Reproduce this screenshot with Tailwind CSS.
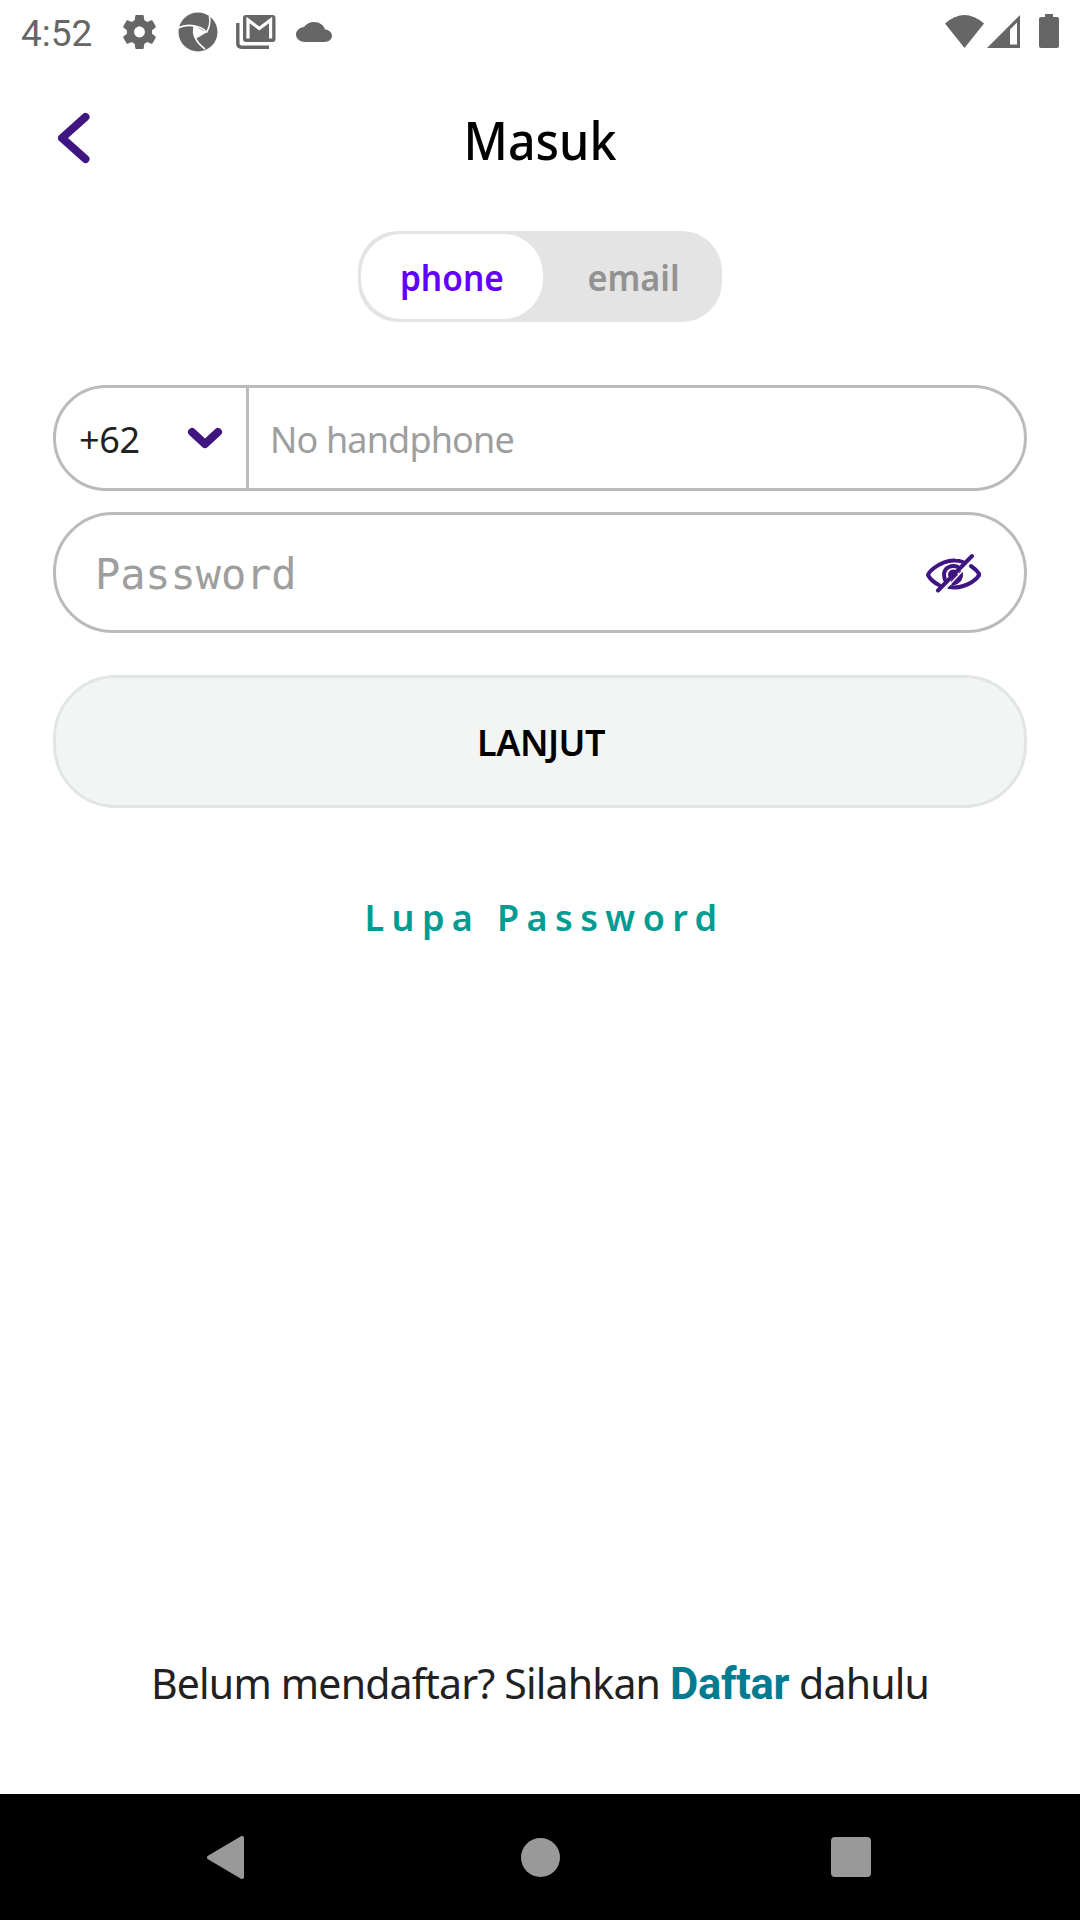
<!DOCTYPE html>
<html lang="id">
<head>
<meta charset="utf-8">
<title>Masuk</title>
<script src="https://cdn.jsdelivr.net/npm/@tailwindcss/browser@4"></script>
</head>
<body class="bg-white">
<div class="flex h-[1920px] w-[1080px] flex-col overflow-hidden bg-white font-['Noto_Sans',sans-serif] text-[36px] text-[#212121]">

  <!-- Status bar -->
  <header class="flex h-16 shrink-0 items-center justify-between pr-[21px] pl-[21px] text-[#666]">
    <div class="flex items-center">
      <span class="w-[102px] pt-[3px] font-['Roboto',sans-serif] text-[37px] leading-[61px]">4:52</span>
      <svg class="h-[34px] w-[33px]" viewBox="2.2 2 19.6 20" preserveAspectRatio="none" fill="currentColor"><path d="M19.43 12.98c.04-.32.07-.64.07-.98s-.03-.66-.07-.98l2.11-1.65c.19-.15.24-.42.12-.64l-2-3.46c-.12-.22-.39-.3-.61-.22l-2.49 1c-.52-.4-1.08-.73-1.69-.98l-.38-2.65C14.46 2.18 14.25 2 14 2h-4c-.25 0-.46.18-.49.42l-.38 2.65c-.61.25-1.17.59-1.69.98l-2.49-1c-.23-.09-.49 0-.61.22l-2 3.46c-.13.22-.07.49.12.64l2.11 1.65c-.04.32-.07.65-.07.98s.03.66.07.98l-2.11 1.65c-.19.15-.24.42-.12.64l2 3.46c.12.22.39.3.61.22l2.49-1c.52.4 1.08.73 1.69.98l.38 2.65c.03.24.24.42.49.42h4c.25 0 .46-.18.49-.42l.38-2.65c.61-.25 1.17-.59 1.69-.98l2.49 1c.23.09.49 0 .61-.22l2-3.46c.12-.22.07-.49-.12-.64l-2.11-1.65zM12 15.2c-1.8 0-3.200-1.400-3.200-3.200s1.400-3.200 3.200-3.200 3.200 1.400 3.200 3.200-1.400 3.200-3.200 3.200z"/></svg>
      <svg class="ml-[22px] h-10 w-10" viewBox="0 0 40 40"><circle cx="20" cy="20" r="19.500" fill="currentColor"/><path d="M16.500 14L28.500 20.500L17.500 27Q14.500 21 16.500 14Z" fill="#fff"/><g fill="none" stroke="#fff" stroke-width="1.600"><path d="M0 16Q9 11 22 15.500Q26 17 28.500 20.500"/><path d="M31.500 4Q33 13 28.500 20.500"/><path d="M38 24Q32 28.500 29 20.500Q22 28 11 26.500L0 22" stroke-width="0"/><path d="M16.500 13.500Q12.500 26 27 37"/></g></svg>
      <svg class="ml-[18px] h-[34px] w-10" viewBox="0 0 40 34"><path d="M1.800 8V28.500Q1.800 32.200 5.500 32.200H33" fill="none" stroke="currentColor" stroke-width="3.400"/><rect x="7" y="0" width="32.500" height="27" rx="3" fill="currentColor"/><path d="M12 23.500V5L23.300 13.500L34.600 5V23.500" fill="none" stroke="#fff" stroke-width="3.200"/></svg>
      <svg class="ml-[20px] h-[20px] w-9" viewBox="0 4 24 16" preserveAspectRatio="none" fill="currentColor"><path d="M19.350 10.040C18.670 6.590 15.640 4 12 4 9.110 4 6.600 5.640 5.350 8.040 2.340 8.360 0 10.910 0 14c0 3.310 2.690 6 6 6h13c2.760 0 5-2.240 5-5 0-2.640-2.050-4.780-4.650-4.960z"/></svg>
    </div>
    <div class="flex items-center pb-[2px]">
      <svg class="h-[33px] w-[39px]" viewBox="0 0 39 33" fill="currentColor"><path d="M0 8.500Q19.500-8.500 39 8.500L19.500 33Z"/></svg>
      <svg class="ml-[3px] h-[33px] w-[33px]" viewBox="0 0 33 33"><path d="M33 0V33H0Z" fill="currentColor"/><path d="M23 14.500L30 7.500V29.500H23Z" fill="#fff"/></svg>
      <svg class="ml-[19px] h-[34px] w-[20px]" viewBox="0 0 20 34" fill="currentColor"><path d="M6 0H14V3H18Q20 3 20 5V32Q20 34 18 34H2Q0 34 0 32V5Q0 3 2 3H6Z"/></svg>
    </div>
  </header>

  <main class="flex grow flex-col px-[53px]">
    <!-- Title row -->
    <div class="mt-[38px] grid h-[70px] grid-cols-[60px_1fr_60px] items-center">
      <svg class="mb-[2px] ml-1 h-[52px] w-9" viewBox="0 0 36 52" fill="none" stroke="#3f1680" stroke-width="8" stroke-linecap="round" stroke-linejoin="round"><path d="M28.500 5L5 26L28.500 47"/></svg>
      <h1 class="scale-x-[0.93] pt-[2px] text-center text-[52px] leading-[72px] font-medium text-black">Masuk</h1>
    </div>

    <!-- Phone / email switch -->
    <div class="mt-[59px] flex h-[91px] w-[364px] self-center rounded-[40px] bg-[#e4e4e4] p-[3px] font-semibold">
      <div class="flex w-[182px] items-center justify-center rounded-[40px] bg-white pt-[2px] text-[#6200ff]"><span class="scale-x-[0.93]">phone</span></div>
      <div class="flex grow items-center justify-center pt-[2px] pl-[5px] text-[#929292]"><span class="scale-x-[0.950]">email</span></div>
    </div>

    <!-- Phone number -->
    <div class="mt-[63px] flex h-[106px] rounded-[53px] border-3 border-[#bbb]">
      <div class="flex w-[193px] items-center justify-between border-r-3 border-[#bbb] pr-[23px] pl-[23px]">
        <span class="pt-1 tracking-[-0.400px]">+62</span>
        <svg class="h-[22px] w-[36px]" viewBox="0 0 36 22" fill="none" stroke="#3f1680" stroke-width="8" stroke-linecap="round" stroke-linejoin="round"><path d="M5 5L18 17L31 5"/></svg>
      </div>
      <div class="flex items-center pt-1 pl-[21px] tracking-[-0.850px] text-[#9e9e9e]">No handphone</div>
    </div>

    <!-- Password -->
    <div class="mt-[21px] flex h-[121px] items-center justify-between rounded-[60px] border-3 border-[#bbb] pr-[43px] pl-[39px]">
      <span class="pt-1 font-['DejaVu_Sans_Mono',monospace] text-[42px] tracking-[-0.100px] text-[#9e9e9e]">Password</span>
      <svg class="h-[40px] w-[56px]" viewBox="0 0 56 40" fill="none" stroke="#3f1680" stroke-width="4" stroke-linecap="round" stroke-linejoin="round"><path d="M14 32Q6 28 3 22Q4 19 9 15Q20 7 30 7.500Q34 7.500 38 9"/><path d="M46 13Q52 17 54.500 21.500Q52 26 47 29Q36 36 24 34"/><path d="M20 27Q17 17 24 14Q28 12 33 14M25 22Q25 18.500 29 18.500"/><path d="M36 20Q37 28 28 30.500M32 23L28 28"/><path d="M13 37.500L47 3"/><path d="M20.500 36L38 17.500" stroke="#fff" stroke-width="1.500"/></svg>
    </div>

    <button class="mt-[42px] h-[133px] shrink-0 rounded-[63px] border-3 border-[#e1e5e4] bg-[#f3f5f5] pt-[3px] pl-[2px] font-semibold tracking-[-0.500px] text-black">LANJUT</button>

    <a class="mt-[85px] self-center pl-[9px] leading-[50px] font-semibold tracking-[7.400px] text-[#009c92]">Lupa Password</a>

    <p class="mt-auto mb-[79px] self-center text-[41px] leading-[60px] tracking-[-0.800px] whitespace-nowrap">Belum mendaftar? Silahkan <span class="font-['Roboto',sans-serif] text-[43.500px] font-bold tracking-[-0.300px] text-[#007c91]">Daftar</span> dahulu</p>
  </main>

  <!-- Navigation bar -->
  <nav class="flex h-[126px] shrink-0 items-center justify-between bg-black pr-[209px] pl-[207px] text-[#999]">
    <svg class="h-[43px] w-[37px]" viewBox="0 0 37 43" fill="currentColor" stroke="currentColor" stroke-width="4" stroke-linejoin="round"><path d="M35 2V41L2 21.500Z"/></svg>
    <div class="ml-[5px] h-[39px] w-[39px] rounded-full bg-[#999]"></div>
    <div class="h-10 w-10 rounded-[4px] bg-[#999]"></div>
  </nav>
</div>
</body>
</html>
